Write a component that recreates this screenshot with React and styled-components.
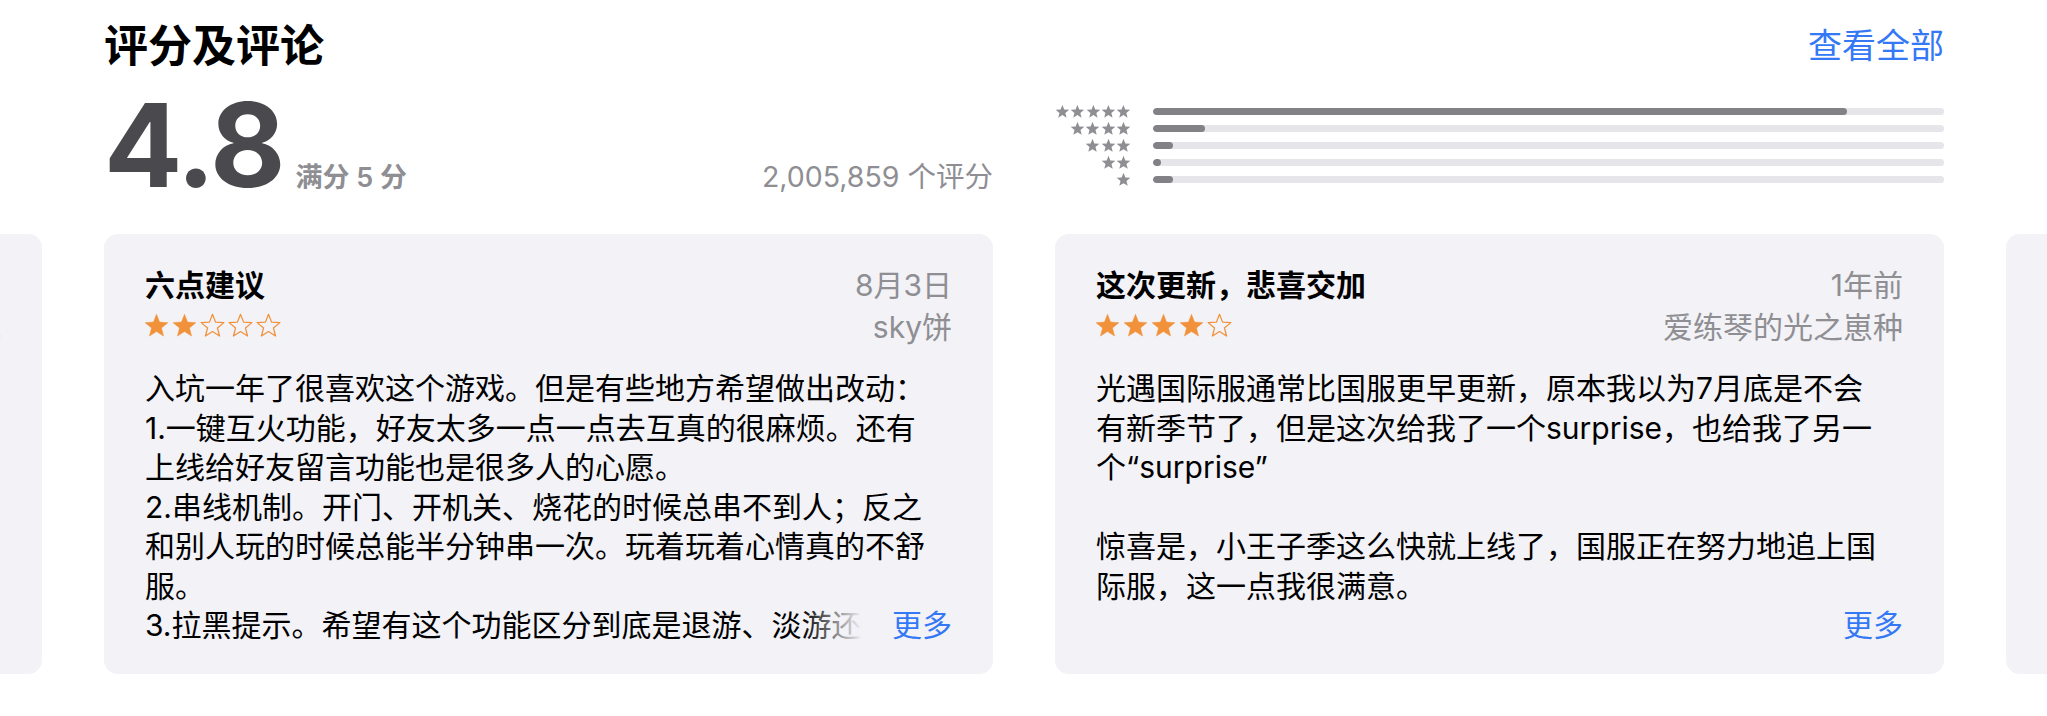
import React from "react";
import styled, { createGlobalStyle } from "styled-components";

const GlobalStyle = createGlobalStyle`
  body {
    margin: 0;
    background: #fff;
    overflow: hidden;
    font-family: "Inter", "Noto Sans CJK SC", sans-serif;
    -webkit-font-smoothing: antialiased;
  }
`;

const Page = styled.div`
  width: 2047px;
  padding-top: 13px;
  overflow: hidden;
`;

const Section = styled.div`
  padding: 0 103px 0 104px;
`;

const HeaderRow = styled.div`
  display: flex;
  align-items: center;
  justify-content: space-between;
  height: 60px;
`;

const Heading = styled.h2`
  margin: 0;
  font-size: 44px;
  font-weight: 700;
  color: #000;
`;

const SeeAll = styled.a`
  font-size: 34px;
  color: #3478f6;
  cursor: pointer;
`;

const Summary = styled.div`
  display: grid;
  grid-template-columns: 889px 889px;
  column-gap: 62px;
  margin-top: 14px;
  height: 116px;
`;

const ScoreBlock = styled.div`
  display: flex;
  align-items: baseline;
`;

const Score = styled.span`
  font-family: "Inter", sans-serif;
  font-size: 116px;
  font-weight: 700;
  line-height: 1;
  letter-spacing: -2px;
  color: #4a4a4e;
`;

const OutOf = styled.span`
  margin-left: 12px;
  font-size: 27px;
  font-weight: 600;
  color: #8e8e93;
`;

const Count = styled.span`
  margin-left: auto;
  font-size: 28.5px;
  color: #8e8e93;
`;

const Histogram = styled.div`
  display: flex;
  flex-direction: column;
  padding-top: 16px;
`;

const HistRow = styled.div`
  display: grid;
  grid-template-columns: 76px 1fr;
  column-gap: 22px;
  align-items: center;
  height: 17px;
`;

const HistStars = styled.div`
  display: flex;
  justify-content: flex-end;
  gap: 0.5px;
`;

const Bar = styled.div`
  height: 7px;
  border-radius: 4px;
  background: #e5e5ea;
  overflow: hidden;
`;

const BarFill = styled.div`
  height: 100%;
  border-radius: 4px;
  background: #818186;
`;

const Shelf = styled.div`
  margin-top: 31px;
  padding-left: 104px;
  overflow: hidden;
`;

const ShelfTrack = styled.div`
  display: flex;
  gap: 62px;
  transform: translateX(${(p) => -p.$scroll}px);
`;

const Card = styled.article`
  flex: 0 0 889px;
  box-sizing: border-box;
  padding: 30px 41px 28px;
  background: #f2f2f7;
  border-radius: 14px;
`;

const CardRow = styled.div`
  display: flex;
  align-items: center;
  justify-content: space-between;
  height: 38px;
  margin-top: ${(p) => (p.$first ? 0 : 4)}px;
`;

const ReviewTitle = styled.h3`
  margin: 0;
  font-size: 30px;
  font-weight: 600;
  color: #000;
`;

const Meta = styled.span`
  font-size: 30px;
  color: #8e8e93;
  white-space: nowrap;
`;

const Stars = styled.div`
  display: flex;
  gap: 3px;
  margin-left: -1px;
`;

const Body = styled.div`
  position: relative;
  margin-top: 25px;
  height: calc(39.5px * 7);
  overflow: hidden;
`;

const BodyText = styled.p`
  margin: 0;
  width: 788px;
  font-size: 30px;
  line-height: 39.5px;
  color: #000;
  white-space: pre-line;
`;

const More = styled.a`
  position: absolute;
  right: 0;
  bottom: 0;
  padding-left: 90px;
  font-size: 30px;
  line-height: 39.5px;
  color: #3478f6;
  background: linear-gradient(to right, rgba(242, 242, 247, 0), #f2f2f7 60px);
  cursor: pointer;
`;

const STAR =
  "M12 1.3L14.94 8.75L22.94 9.25L16.76 14.35L18.76 22.1L12 17.8L5.24 22.1L7.24 14.35L1.06 9.25L9.06 8.75Z";

const GrayStar = () => (
  <svg width="15" height="15" viewBox="0 0 24 24">
    <path d={STAR} fill="#8e8e93" />
  </svg>
);

const ReviewStar = ({ filled }) => (
  <svg width="25" height="25" viewBox="0 0 24 24">
    <path
      d={STAR}
      fill={filled ? "#f1923b" : "none"}
      stroke="#f1923b"
      strokeWidth={filled ? 0.5 : 1.2}
      strokeLinejoin="round"
    />
  </svg>
);

const distribution = [
  { stars: 5, share: 87.7 },
  { stars: 4, share: 6.6 },
  { stars: 3, share: 2.5 },
  { stars: 2, share: 1 },
  { stars: 1, share: 2.5 },
];

const reviews = [
  {
    title: "画面和音乐都很治愈",
    date: "2周前",
    author: "云野的小光",
    rating: 5,
    text: "和朋友一起飞过云野的时候真的很感动，音乐也特别好听，希望以后能出更多的季节和地图。",
  },
  {
    title: "六点建议",
    date: "8月3日",
    author: "sky饼",
    rating: 2,
    text:
      "入坑一年了很喜欢这个游戏。但是有些地方希望做出改动：\n1.一键互火功能，好友太多一点一点去互真的很麻烦。还有上线给好友留言功能也是很多人的心愿。\n2.串线机制。开门、开机关、烧花的时候总串不到人；反之和别人玩的时候总能半分钟串一次。玩着玩着心情真的不舒服。\n3.拉黑提示。希望有这个功能区分到底是退游、淡游还是被拉黑了，这样就不用一直等着了。",
  },
  {
    title: "这次更新，悲喜交加",
    date: "1年前",
    author: "爱练琴的光之崽种",
    rating: 4,
    text:
      "光遇国际服通常比国服更早更新，原本我以为7月底是不会有新季节了，但是这次给我了一个surprise，也给我了另一个“surprise”\n\n惊喜是，小王子季这么快就上线了，国服正在努力地追上国际服，这一点我很满意。",
  },
  {
    title: "希望优化一下",
    date: "3个月前",
    author: "遇见光",
    rating: 3,
    text:
      "游戏很好玩，但是手机发热很严重。\n1.希望能优化一下画质设置。\n2.希望好友列表可以分组。\n3.蜡烛获取太难了。\n4.希望可以多出一些小游戏。",
  },
];

const ReviewCard = ({ title, date, author, rating, text }) => (
  <Card>
    <CardRow $first>
      <ReviewTitle>{title}</ReviewTitle>
      <Meta>{date}</Meta>
    </CardRow>
    <CardRow>
      <Stars>
        {[1, 2, 3, 4, 5].map((n) => (
          <ReviewStar key={n} filled={n <= rating} />
        ))}
      </Stars>
      <Meta>{author}</Meta>
    </CardRow>
    <Body>
      <BodyText>{text}</BodyText>
      <More>更多</More>
    </Body>
  </Card>
);

export default function App() {
  return (
    <Page>
      <GlobalStyle />
      <Section>
        <HeaderRow>
          <Heading>评分及评论</Heading>
          <SeeAll>查看全部</SeeAll>
        </HeaderRow>
        <Summary>
          <ScoreBlock>
            <Score>4.8</Score>
            <OutOf>满分 5 分</OutOf>
            <Count>2,005,859 个评分</Count>
          </ScoreBlock>
          <Histogram>
            {distribution.map((d) => (
              <HistRow key={d.stars}>
                <HistStars>
                  {Array.from({ length: d.stars }).map((_, i) => (
                    <GrayStar key={i} />
                  ))}
                </HistStars>
                <Bar>
                  <BarFill style={{ width: `${d.share}%` }} />
                </Bar>
              </HistRow>
            ))}
          </Histogram>
        </Summary>
      </Section>
      <Shelf>
        <ShelfTrack $scroll={951}>
          {reviews.map((r) => (
            <ReviewCard key={r.title} {...r} />
          ))}
        </ShelfTrack>
      </Shelf>
    </Page>
  );
}
